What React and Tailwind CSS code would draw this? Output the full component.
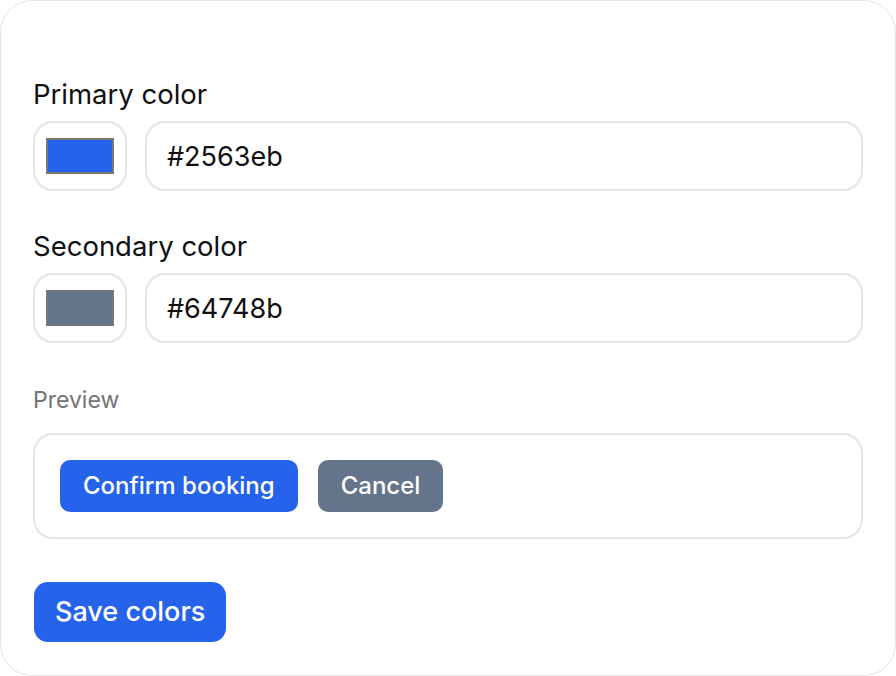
import { useState } from 'react'

const ColorField = ({ label, value, onChange }) => {
  return (
    <div>
      <div className="text-[27.5px] leading-[36px] text-[#111] mb-[9px]">{label}</div>
      <div className="flex gap-[18px]">
        <div className="w-[94px] h-[70px] shrink-0 rounded-[20px] border-2 border-[#e5e5e5] flex items-center justify-center">
          <div
            className="w-[68px] h-[36px] border-2 border-[#777]"
            style={{ backgroundColor: value }}
          ></div>
        </div>
        <input
          value={value}
          onChange={(e) => onChange(e.target.value)}
          className="flex-1 h-[70px] rounded-[20px] border-2 border-[#e5e5e5] px-[20px] text-[27px] text-[#111] outline-none"
        />
      </div>
    </div>
  )
}

const App = () => {
  const [primary, setPrimary] = useState('#2563eb')
  const [secondary, setSecondary] = useState('#64748b')

  return (
    <div className="w-[896px] h-[676px] bg-white font-['Inter',sans-serif]">
      <div className="h-full rounded-[32px] border border-[#e6e6e6] px-[32px] pt-[75px] pb-[32px]">
        <ColorField label="Primary color" value={primary} onChange={setPrimary} />
        <div className="mt-[37px]">
          <ColorField label="Secondary color" value={secondary} onChange={setSecondary} />
        </div>

        <div className="mt-[41px] text-[23px] leading-[32px] text-[#737373]">Preview</div>
        <div className="mt-[17px] rounded-[20px] border-2 border-[#e5e5e5] px-[25px] py-[25px] flex gap-[20px]">
          <button
            className="h-[52px] px-[23px] rounded-[10px] text-white text-[24px] font-medium"
            style={{ backgroundColor: primary }}
          >
            Confirm booking
          </button>
          <button
            className="h-[52px] px-[23px] rounded-[10px] text-white text-[24px] font-medium"
            style={{ backgroundColor: secondary }}
          >
            Cancel
          </button>
        </div>

        <button className="mt-[43px] ml-px h-[60px] px-[21px] rounded-[14px] bg-[#2563eb] text-white text-[27px] font-medium">
          Save colors
        </button>
      </div>
    </div>
  )
}

export default App
